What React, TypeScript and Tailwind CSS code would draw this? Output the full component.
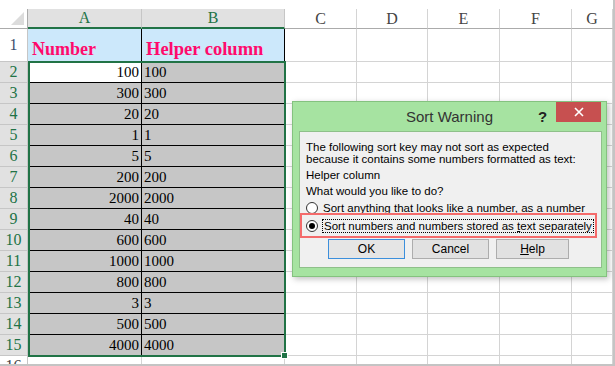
import React from 'react';

const serif = { fontFamily: '"Liberation Serif", "Times New Roman", serif' };
const sans = { fontFamily: '"Liberation Sans", Arial, sans-serif' };

const rows: [string, string][] = [
  ['100', '100'],
  ['300', '300'],
  ['20', '20'],
  ['1', '1'],
  ['5', '5'],
  ['200', '200'],
  ['2000', '2000'],
  ['40', '40'],
  ['600', '600'],
  ['1000', '1000'],
  ['800', '800'],
  ['3', '3'],
  ['500', '500'],
  ['4000', '4000'],
];

// widths of the empty columns C..G
const emptyCols = ['w-[72px]', 'w-[71px]', 'w-[72px]', 'w-[72px]', 'w-[41px]'];

const EmptyCells: React.FC = () => (
  <>
    {emptyCols.map((w, i) => (
      <div key={i} className={`${w} shrink-0 border-r border-b border-[#d4d4d4]`} />
    ))}
  </>
);

const App: React.FC = () => {
  return (
    <div className="w-[615px] h-[366px] bg-white relative overflow-hidden border-r-2 border-b-2 border-[#c4c4c4]">
      {/* Sheet */}
      <div className="pt-[9px]" style={serif}>
        {/* Column headers */}
        <div className="flex h-[20px] text-[16px] leading-none">
          <div className="w-[28px] shrink-0 border-r border-b border-[#ababab] flex items-end justify-end pr-[3px] pb-[3px]">
            <svg width="13" height="13" viewBox="0 0 13 13">
              <polygon points="13,0 13,13 0,13" fill="#dcdcdc" />
            </svg>
          </div>
          <div className="w-[114px] shrink-0 bg-[#e1e1e1] border-r border-[#c6c6c6] border-b-2 border-b-[#217346] text-[#217346] flex items-center justify-center">A</div>
          <div className="w-[143px] shrink-0 bg-[#e1e1e1] border-r border-[#c6c6c6] border-b-2 border-b-[#217346] text-[#217346] flex items-center justify-center">B</div>
          {['C', 'D', 'E', 'F', 'G'].map((c, i) => (
            <div
              key={c}
              className={`${emptyCols[i]} shrink-0 border-r border-[#d4d4d4] border-b border-b-[#ababab] text-[#444] flex items-center justify-center`}
            >
              {c}
            </div>
          ))}
        </div>

        {/* Row 1 */}
        <div className="flex h-[33px]">
          <div className="w-[28px] shrink-0 border-r border-b border-[#c6c6c6] text-[#3d4f6b] text-[16px] flex items-end justify-center pb-[4px]">1</div>
          <div className="w-[114px] shrink-0 bg-[#cce8fb] border-r border-b border-black text-[#ff0a6c] font-bold text-[18px] flex items-end pl-[4px] pb-[3px] leading-none">Number</div>
          <div className="w-[143px] shrink-0 bg-[#cce8fb] border-r border-b border-black text-[#ff0a6c] font-bold text-[18.5px] flex items-end pl-[4px] pb-[3px] leading-none">Helper column</div>
          <EmptyCells />
        </div>

        {/* Data rows */}
        {rows.map(([a, b], i) => (
          <div key={i} className="flex h-[21px] text-[15px] leading-none">
            <div className="w-[28px] shrink-0 bg-[#e1e1e1] border-r border-b border-[#c6c6c6] text-[#217346] text-[16px] flex items-center justify-center">
              {i + 2}
            </div>
            <div className={`w-[114px] shrink-0 ${i === 0 ? 'bg-white' : 'bg-[#c6c6c6]'} border-r border-b border-black flex items-center justify-end pr-[2px] text-black`}>
              {a}
            </div>
            <div className="w-[143px] shrink-0 bg-[#c6c6c6] border-r border-b border-black flex items-center pl-[2px] text-black">{b}</div>
            <EmptyCells />
          </div>
        ))}

        {/* Row 16 (cut off) */}
        <div className="flex h-[21px]">
          <div className="w-[28px] shrink-0 border-r border-b border-[#c6c6c6] text-[#444] text-[16px] flex items-center justify-center">16</div>
          <div className="w-[114px] shrink-0 border-r border-b border-[#d4d4d4]" />
          <div className="w-[143px] shrink-0 border-r border-b border-[#d4d4d4]" />
          <EmptyCells />
        </div>
      </div>

      {/* Selection border A2:B15 */}
      <div className="absolute left-[28px] top-[61px] w-[258px] h-[296px] border-2 border-[#217346]" />
      <div className="absolute left-[281px] top-[352px] w-[7px] h-[7px] bg-[#217346] border border-white" />

      {/* Sort Warning dialog */}
      <div
        className="absolute left-[292px] top-[101px] w-[315px] h-[176px] bg-[#a6e3a1] border border-[#84c27f] shadow-[2px_2px_6px_rgba(0,0,0,0.25)] flex flex-col"
        style={sans}
      >
        <div className="h-[29px] shrink-0 relative flex items-center justify-center">
          <span className="text-[15px] text-[#333] pt-[2px]">Sort Warning</span>
          <span className="absolute left-[245px] top-[4px] text-[15px] font-bold text-[#222]">?</span>
          <div className="absolute right-[5px] top-0 w-[45px] h-[20px] bg-[#c75050] flex items-center justify-center">
            <svg width="10" height="10" viewBox="0 0 10 10">
              <path d="M1 1 L9 9 M9 1 L1 9" stroke="#fff" strokeWidth="1.6" />
            </svg>
          </div>
        </div>

        <div className="relative flex-1 ml-[6px] mr-[4px] mb-[8px] bg-[#f0f0f0] border border-[#8fc08a] pl-[6px] pt-[9px] text-[11.5px] text-black">
          <div className="leading-[12px]">
            The following sort key may not sort as expected
            <br />
            because it contains some numbers formatted as text:
          </div>
          <div className="leading-[12px] mt-[4px]">Helper column</div>
          <div className="leading-[12px] mt-[4px]">What would you like to do?</div>

          <div className="flex items-center h-[16px] mt-[3px]">
            <span className="w-[12px] h-[12px] rounded-full border border-[#333] bg-white shrink-0" />
            <span className="ml-[5px] leading-[12px]">Sort anything that looks like a number, as a number</span>
          </div>
          <div className="flex items-center h-[16px] mt-[2px]">
            <span className="w-[12px] h-[12px] rounded-full border border-[#333] bg-white shrink-0 flex items-center justify-center">
              <span className="w-[6px] h-[6px] rounded-full bg-black" />
            </span>
            <span className="ml-[4px] leading-[12px] border border-dotted border-black px-[1px]">
              Sort numbers and numbers stored as <span className="underline">t</span>ext separately
            </span>
          </div>

          <div className="flex gap-[7px] ml-[22px] mt-[5px] text-[12px]">
            <div className="w-[77px] h-[20px] bg-[#e5e5e5] border border-[#3c8fdc] flex items-center justify-center">OK</div>
            <div className="w-[77px] h-[20px] bg-[#e1e1e1] border border-[#adadad] flex items-center justify-center">Cancel</div>
            <div className="w-[73px] h-[20px] bg-[#e1e1e1] border border-[#adadad] flex items-center justify-center">
              <span className="underline">H</span>elp
            </div>
          </div>

          {/* highlight around second option */}
          <div className="absolute left-[0px] top-[81px] w-[297px] h-[25px] border-2 border-[#f46b6b]" />
        </div>
      </div>
    </div>
  );
};

export default App;
